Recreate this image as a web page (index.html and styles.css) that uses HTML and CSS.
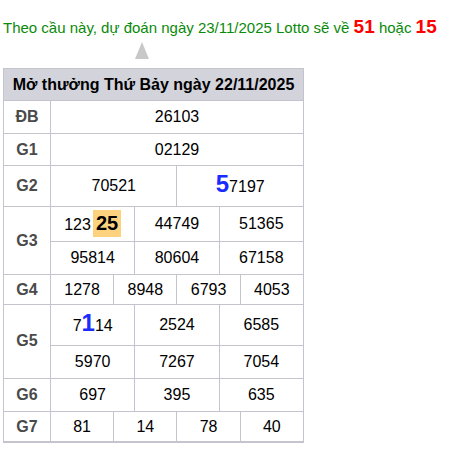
FILE: index.html
```html
<!DOCTYPE html>
<html lang="vi">
<head>
<meta charset="utf-8">
<link rel="stylesheet" href="styles.css">
</head>
<body>
<div class="page">
  <p class="predict">Theo cầu này, dự đoán ngày 23/11/2025 Lotto sẽ về <b class="hot">51</b> hoặc <b class="hot">15</b></p>
  <div class="arrow-row"><span class="arrow"></span></div>
  <table class="kq">
    <colgroup>
      <col class="c-label">
      <col span="12">
    </colgroup>
    <thead>
      <tr><th colspan="13" class="title">Mở thưởng Thứ Bảy ngày 22/11/2025</th></tr>
    </thead>
    <tbody>
      <tr><td class="lbl">ĐB</td><td colspan="12">26103</td></tr>
      <tr class="g1"><td class="lbl">G1</td><td colspan="12">02129</td></tr>
      <tr class="tall"><td class="lbl">G2</td><td colspan="6">70521</td><td colspan="6"><b class="big">5</b>7197</td></tr>
      <tr><td class="lbl" rowspan="2">G3</td><td colspan="4">123<b class="mark">25</b></td><td colspan="4">44749</td><td colspan="4">51365</td></tr>
      <tr><td colspan="4">95814</td><td colspan="4">80604</td><td colspan="4">67158</td></tr>
      <tr class="short"><td class="lbl">G4</td><td colspan="3">1278</td><td colspan="3">8948</td><td colspan="3">6793</td><td colspan="3">4053</td></tr>
      <tr class="tall"><td class="lbl" rowspan="2">G5</td><td colspan="4">7<b class="big">1</b>14</td><td colspan="4">2524</td><td colspan="4">6585</td></tr>
      <tr><td colspan="4">5970</td><td colspan="4">7267</td><td colspan="4">7054</td></tr>
      <tr><td class="lbl">G6</td><td colspan="4">697</td><td colspan="4">395</td><td colspan="4">635</td></tr>
      <tr class="short"><td class="lbl">G7</td><td colspan="3">81</td><td colspan="3">14</td><td colspan="3">78</td><td colspan="3">40</td></tr>
    </tbody>
  </table>
</div>
</body>
</html>
```
FILE: styles.css
```css
html, body {
  margin: 0;
  padding: 0;
  background: #fff;
}
body {
  font-family: "Liberation Sans", Arial, sans-serif;
  color: #000;
}
.page {
  padding: 0 3px;
  width: 300px;
}
.predict {
  margin: 0;
  padding-top: 16px;
  white-space: nowrap;
  font-size: 15px;
  line-height: 22px;
  color: #0a8a0a;
}
.hot {
  color: #f00;
  font-size: 19px;
  font-weight: bold;
}
.arrow-row {
  display: flex;
  justify-content: center;
  margin-top: 3px;
  height: 26px;
}
.arrow {
  display: block;
  width: 0;
  height: 0;
  margin-left: -22px;
  border-left: 7px solid transparent;
  border-right: 7px solid transparent;
  border-bottom: 17px solid #c8c8c8;
}
.kq {
  width: 301px;
  border-collapse: collapse;
  table-layout: fixed;
  font-size: 16px;
  border-bottom: 2px solid #c4c4ce;
}
.c-label {
  width: 47px;
}
.kq th, .kq td {
  border: 1px solid #c4c4ce;
  text-align: center;
  padding: 7px 0;
  line-height: 18px;
  white-space: nowrap;
}
.title {
  background: #d3d3dc;
  font-weight: bold;
  font-size: 16px;
}
.kq th.title {
  padding: 7px 0 6px;
}
.lbl {
  font-weight: bold;
  color: #4a4a4a;
}
.kq .g1 td {
  padding: 7px 0 6px;
}
.kq .tall td {
  padding-top: 9px;
  padding-bottom: 10px;
}
.kq .short td {
  padding-top: 6px;
  padding-bottom: 5px;
}
.big {
  color: #1a2bff;
  font-size: 24px;
  line-height: 18px;
}
.mark {
  display: inline-block;
  background: #fcd27f;
  font-size: 20px;
  line-height: 27px;
  padding: 0 3px;
  margin: -4px 0 -5px 2px;
}
```
